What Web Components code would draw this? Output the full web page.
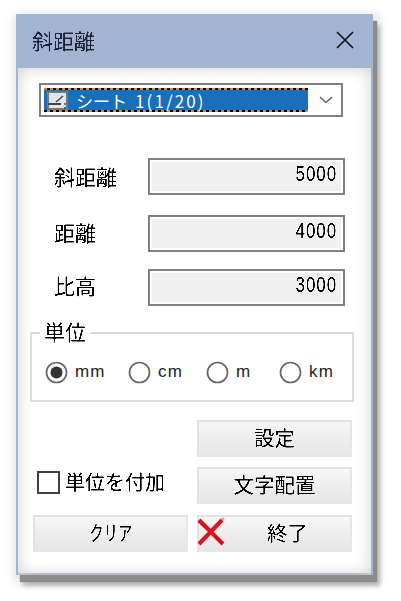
<!DOCTYPE html>
<html lang="ja"><head><meta charset="utf-8"><title>斜距離</title>
<style>
html{overflow:hidden}
html,body{margin:0;padding:0;background:#fff}
body{font-family:"Noto Sans CJK JP","Liberation Sans",sans-serif;color:#000;padding:14px 28px 26px 16px;width:357px}
</style></head><body>
<x-window heading="斜距離">
  <x-combo style="margin:15px 0 0 21px">シート<span style="letter-spacing:2.1px">1(1/20)</span></x-combo>
  <x-field label="斜距離" shift="-1" style="margin-top:41px">5000</x-field>
  <x-field label="距離" shift="-2" style="margin-top:20px">4000</x-field>
  <x-field label="比高" shift="-3" style="margin-top:17px">3000</x-field>
  <x-group legend="単位" style="margin:17px 0 0 12px">
    <x-radio checked>mm</x-radio><x-radio>cm</x-radio><x-radio>m</x-radio><x-radio>km</x-radio>
  </x-group>
  <x-actions style="margin-top:18px">
    <span></span><x-btn>設定</x-btn>
    <x-check>単位を付加</x-check><x-btn>文字配置</x-btn>
    <x-btn><span style="display:inline-block;transform:scaleX(.7)">クリア</span></x-btn><x-btn><svg slot="icon" width="28" height="30" viewBox="0 0 28 30"><path d="M2 3L26 27M25 3L2 27" stroke="#e0101e" stroke-width="4" fill="none"/><path d="M1 5L10 13M17 18L25 27" stroke="#8a1a20" stroke-width="1" fill="none" opacity=".7"/><path d="M25 1L27 3" stroke="#aaa" stroke-width="2"/></svg>終了</x-btn>
  </x-actions>
</x-window>
<script>
const CRISP='<svg width="0" height="0" style="position:absolute"><filter id="crisp" x="-5%" y="-5%" width="110%" height="110%" color-interpolation-filters="sRGB"><feComponentTransfer><feFuncA type="linear" slope="3.2" intercept="-1.1"/></feComponentTransfer></filter></svg>';
function def(name,css,html){
  customElements.define(name,class extends HTMLElement{
    constructor(){super();const s=this.attachShadow({mode:'open'});
      s.innerHTML='<style>'+css+'</style>'+CRISP+(typeof html==='function'?html(this):html);}
  });
}
def('x-window',`
 :host{display:block;box-sizing:border-box;width:357px;height:561px;background:#fff;border:2px solid #a1b4d2;border-top:0;
   box-shadow:4px 7px 1px #8c8c8c,7px 11px 4px #b8b8b8,2px 4px 10px 4px #e2e2e2}
 header{height:54px;margin:0 -2px;background:#a1b4d2;display:flex;align-items:center;justify-content:space-between;padding:0 18px 2px 16px;box-sizing:border-box}
 h1{margin:0;font-weight:400;font-size:21px;line-height:24px;color:#1c2436;filter:url(#crisp)}
 main{height:507px;box-sizing:border-box;box-shadow:inset 0 0 16px #cfcfcf;overflow:hidden}
 svg{display:block}
`,h=>`<header><h1>${h.getAttribute('heading')}</h1>
 <svg width="20" height="20" viewBox="0 0 20 20"><path d="M2 2L18 18M18 2L2 18" stroke="#111" stroke-width="1.6"/></svg></header><main><slot></slot></main>`);
def('x-combo',`
 :host{display:flex;box-sizing:border-box;width:304px;height:34px;border:2px solid #808080;background:#fff;padding:3px;align-items:stretch;font:17px/1 "Noto Sans CJK JP",sans-serif}
 .sel{box-sizing:border-box;width:264px;padding:2px 0 2px 0;background:linear-gradient(#1a6fb8,#1a6fb8) content-box,repeating-conic-gradient(#000 0 25%,#f08020 0 50%) 0 0/6px 6px;color:#fff;display:flex;align-items:center;white-space:nowrap}
 .in{display:flex;align-items:center;gap:8px;padding-left:3px}
 .arrow{flex:1;display:flex;align-items:center;justify-content:center;padding-left:6px}
 svg{display:block}
`,`<div class="sel"><div class="in"><svg width="21" height="19" viewBox="0 0 21 19"><rect x="1" y="1" width="19" height="17" fill="#dfe6ea" stroke="#777" stroke-width="2"/><path d="M1 13H14" stroke="#444" stroke-width="2"/><path d="M9 11L16 5" stroke="#444" stroke-width="1.5"/><path d="M18 12v2M18 16v2" stroke="#111"/></svg><slot></slot></div></div>
 <div class="arrow"><svg width="14" height="8" viewBox="0 0 14 8"><path d="M1 1L7 6.5L13 1" fill="none" stroke="#666" stroke-width="1.6"/></svg></div>`);
def('x-field',`
 :host{display:flex;padding-left:36px;align-items:center}
 label{width:94px;font-size:21px;line-height:28px;position:relative;white-space:nowrap;filter:url(#crisp)}
 output{box-sizing:border-box;width:197px;height:37px;border:2px solid #808080;box-shadow:inset 0 0 0 2px #fff;background:#f0f0f0;padding:5px 6px 0 0;text-align:right;font:17px/20px "Liberation Sans",sans-serif;letter-spacing:.9px}
 output span{display:inline-block;transform:scaleY(1.25);filter:url(#crisp)}
`,h=>`<label style="top:${h.getAttribute('shift')}px">${h.getAttribute('label')}</label><output><span><slot></slot></span></output>`);
def('x-group',`
 :host{display:block;width:324px}
 fieldset{margin:0;padding:0 0 0 13px;height:79px;box-sizing:border-box;border:2px solid #dcdcdc}
 legend{padding:0 4px;margin-left:-5px;font-size:21px;line-height:20px;position:relative;top:-2px;filter:url(#crisp)}
 div{display:grid;grid-template-columns:83px 78px 73px 1fr;align-items:center;height:42px;margin-top:8px}
`,h=>`<fieldset><legend>${h.getAttribute('legend')}</legend><div><slot></slot></div></fieldset>`);
def('x-radio',`
 :host{display:flex;align-items:center;gap:7px;font:17px/22px "Liberation Sans",sans-serif;letter-spacing:1.2px;color:#222}
 svg{display:block;flex:none}
`,h=>`<svg width="23" height="23" viewBox="0 0 23 23"><circle cx="11.5" cy="11.5" r="10" fill="#fff" stroke="#666" stroke-width="1.7"/>${h.hasAttribute('checked')?'<circle cx="11.5" cy="11.5" r="6" fill="#333"/>':''}</svg><slot></slot>`);
def('x-actions',`
 :host{display:grid;grid-template-columns:155px 155px;grid-template-rows:37px 37px 37px;column-gap:9px;row-gap:10px;padding-left:15px}
 ::slotted(:nth-child(n+5)){margin-top:1px}
`,`<slot></slot>`);
def('x-btn',`
 :host{display:flex;box-sizing:border-box;height:37px;align-items:center;background:linear-gradient(#f6f6f6,#e6e6e6);border:2px solid #e2e2e2;border-right-color:#e6e6e6;border-bottom-color:#e6e6e6;font-size:20.5px;line-height:24px}
 span{flex:1;text-align:center;position:relative;top:-2px;filter:url(#crisp)}
 ::slotted(svg){display:block;flex:none;margin:0 0 3px -2px}
`,`<slot name="icon"></slot><span><slot></slot></span>`);
def('x-check',`
 :host{display:flex;align-items:center;gap:5px;padding:0 0 7px 4px;font-size:20px;line-height:24px;white-space:nowrap}
 i{display:block;box-sizing:border-box;width:23px;height:23px;border:2px solid #404040;background:#fff}
 span{filter:url(#crisp)}
`,`<i></i><span><slot></slot></span>`);
</script>
</body></html>
